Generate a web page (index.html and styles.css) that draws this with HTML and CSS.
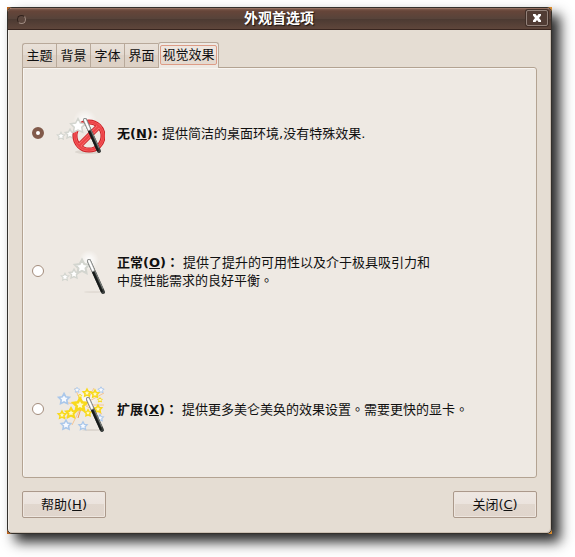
FILE: index.html
```html
<!DOCTYPE html>
<html lang="zh-CN">

<head>
    <meta charset="UTF-8">
    <meta name="viewport" content="width=device-width, initial-scale=1.0">
    <title>外观首选项</title>
    <link rel="stylesheet" href="styles.css">
</head>

<body>
    <svg class="defs" width="0" height="0" aria-hidden="true">
        <defs>
            <path id="star" d="M0 -10 L3.2 -4 L9.8 -3 L5 1.8 L6.2 8.4 L0 5.4 L-6.2 8.4 L-5 1.8 L-9.8 -3 L-3.2 -4 Z" />
            <radialGradient id="glow">
                <stop offset="0" stop-color="#fff" />
                <stop offset="1" stop-color="#fff" stop-opacity="0" />
            </radialGradient>
            <g id="wand">
                <path d="M0 0 L14 31" stroke="#3b3f3e" stroke-width="4" stroke-linecap="round" />
                <path d="M0 0 L4 9" stroke="#9a9c9a" stroke-width="4" stroke-linecap="round" />
                <path d="M0 0 L4 9" stroke="#fff" stroke-width="2" stroke-linecap="round" />
                <path d="M6 10 L14 28" stroke="#7b807d" stroke-width="1" />
                <path d="M4 11 L13 31" stroke="#151918" stroke-width="2" />
            </g>
        </defs>
    </svg>

    <div class="desktop">
        <main class="window">
            <header class="titlebar">
                <button class="menu-button" type="button" aria-label="菜单"></button>
                <h1>外观首选项</h1>
                <button class="close-button" type="button" aria-label="关闭窗口">
                    <svg width="10" height="10" viewBox="0 0 20 20">
                        <path d="M2 2H7L10 6L13 2H18V5L14 10L18 15V18H13L10 14L7 18H2V15L6 10L2 5Z" fill="#fff" />
                    </svg>
                </button>
            </header>

            <div class="content">
                <div class="tabs" role="tablist">
                    <button class="tab" type="button" role="tab">主题</button>
                    <button class="tab" type="button" role="tab">背景</button>
                    <button class="tab" type="button" role="tab">字体</button>
                    <button class="tab" type="button" role="tab">界面</button>
                    <button class="tab active" type="button" role="tab" aria-selected="true"><span>视觉效果</span></button>
                </div>

                <form class="panel">
                    <div class="option">
                        <input type="radio" name="effects" id="none" checked>
                        <svg class="icon" viewBox="-2 0 49 49" fill="none">
                            <ellipse cx="30" cy="43" rx="13" ry="2" fill="#dcd6cf" />
                            <circle cx="27" cy="12" r="12" fill="url(#glow)" />
                            <g fill="#fff" stroke="#d3d5cf" stroke-width="3">
                                <use href="#star" transform="translate(3 27) scale(.38)" />
                                <use href="#star" transform="translate(12 25) scale(.48)" />
                            </g>
                            <circle cx="31" cy="27" r="14" stroke="#cc1f24" stroke-width="5" />
                            <path d="M21 37 L41 17" stroke="#cc1f24" stroke-width="6" />
                            <circle cx="31" cy="27" r="14" stroke="#f4696a" stroke-width="3" />
                            <path d="M20 38 L42 16" stroke="#f4696a" stroke-width="4" />
                            <circle cx="31" cy="27" r="14" stroke="#ee4448" stroke-width="2" />
                            <path d="M21 37 L41 17" stroke="#ee4448" stroke-width="2" />
                            <use href="#star" transform="translate(20 17) scale(.75)" fill="#fff" stroke="#d3d5cf" stroke-width="2" />
                            <use href="#wand" transform="translate(27 11)" />
                        </svg>
                        <label for="none"><strong>无(<u>N</u>):</strong> 提供简洁的桌面环境,没有特殊效果.</label>
                    </div>

                    <div class="option">
                        <input type="radio" name="effects" id="normal">
                        <svg class="icon" viewBox="-2 0 49 49" fill="none">
                            <ellipse cx="36" cy="45" rx="10" ry="1" fill="#e2dcd5" />
                            <circle cx="31" cy="13" r="10" fill="url(#glow)" />
                            <g fill="#fff" stroke="#d3d5cf" stroke-width="3">
                                <use href="#star" transform="translate(7 30) scale(.38)" />
                                <use href="#star" transform="translate(16 27) scale(.48)" />
                                <use href="#star" transform="translate(24 20) scale(.72)" />
                            </g>
                            <use href="#wand" transform="translate(31 14)" />
                        </svg>
                        <label for="normal"><strong>正常(<u>O</u>)<span class="mark" lang="zh-TW">：</span></strong> 提供了提升的可用性以及介于极具吸引力和<br>中度性能需求的良好平衡<span class="mark" lang="zh-TW">。</span></label>
                    </div>

                    <div class="option">
                        <input type="radio" name="effects" id="extra">
                        <svg class="icon" viewBox="-2 0 49 49" fill="none">
                            <ellipse cx="34" cy="45" rx="10" ry="1" fill="#dcd6cf" />
                            <circle cx="29" cy="14" r="11" fill="url(#glow)" />
                            <g stroke="#f7c592" stroke-width="1">
                                <path d="M24 20 L4 17 M24 20 L6 34 M24 20 L14 40 M24 20 L17 3 M28 18 L36 3 M28 18 L46 8 M28 20 L46 20 M28 21 L44 29" />
                                <path d="M24 20 L20 33" stroke="#f29a55" />
                            </g>
                            <g fill="#f7faff" stroke="#aac7ea" stroke-width="3">
                                <use href="#star" transform="translate(6 14) scale(.55)" />
                                <use href="#star" transform="translate(19 5) scale(.28)" />
                                <use href="#star" transform="translate(43 5) scale(.32)" />
                                <use href="#star" transform="translate(8 40) scale(.5)" />
                                <use href="#star" transform="translate(25 41) scale(.42)" />
                                <use href="#star" transform="translate(42 33) scale(.35)" />
                            </g>
                            <g fill="#fffbc8" stroke="#f8d91c" stroke-width="4">
                                <use href="#star" transform="translate(4 30) scale(.38)" />
                                <use href="#star" transform="translate(13 28) scale(.5)" />
                                <use href="#star" transform="translate(22 20) scale(.66)" />
                                <use href="#star" transform="translate(29 8) scale(.38)" />
                                <use href="#star" transform="translate(37 9) scale(.38)" />
                                <use href="#star" transform="translate(40 24) scale(.38)" />
                                <use href="#star" transform="translate(30 28) scale(.34)" />
                                <use href="#star" transform="translate(42 15) scale(.24)" />
                                <use href="#star" transform="translate(22 11) scale(.2)" />
                            </g>
                            <use href="#wand" transform="translate(30 14)" />
                        </svg>
                        <label for="extra"><strong>扩展(<u>X</u>)<span class="mark" lang="zh-TW">：</span></strong> 提供更多美仑美奂的效果设置<span class="mark" lang="zh-TW">。</span>需要更快的显卡<span class="mark" lang="zh-TW">。</span></label>
                    </div>
                </form>

                <footer class="actions">
                    <button class="action" type="button">帮助(<u>H</u>)</button>
                    <button class="action" type="button">关闭(<u>C</u>)</button>
                </footer>
            </div>
        </main>
    </div>
</body>

</html>
```
FILE: styles.css
```css
* {
    box-sizing: border-box;
}

body {
    margin: 0;
    padding: 7px 23px 23px 7px;
    background-color: #fff;
    font-family: "DejaVu Sans", "Noto Sans CJK SC", sans-serif;
    font-size: 13px;
    line-height: 17px;
    color: #101010;
}

button {
    margin: 0;
    padding: 0;
    font: inherit;
    color: inherit;
}

.defs {
    position: absolute;
}

/* wallpaper showing through the rounded corners */
.desktop {
    background: linear-gradient(to right, #b9621c, #d98a2b);
    box-shadow: 8px 8px 12px rgba(0, 0, 0, 0.85);
}

.window {
    background-color: #e5ddd3;
    border: 1px solid #33302c;
    border-radius: 5px;
    overflow: hidden;
    box-shadow: inset 1px 0 #f3eee8, inset -1px -1px #cbbfb2;
}

/* Title bar */
.titlebar {
    display: flex;
    align-items: center;
    height: 22px;
    padding: 0 3px 0 9px;
    background: linear-gradient(#7a594c, #664539 10%, #56433a 50%, #4c3a32 52%, #5f463b);
    border-top: 1px solid #947061;
    border-bottom: 1px solid #38251f;
}

.titlebar h1 {
    flex: 1;
    margin: 0;
    padding-left: 6px;
    padding-bottom: 2px;
    font-size: 14px;
    line-height: 18px;
    text-align: center;
    color: #fff;
    text-shadow: 1px 1px 1px #1c120e;
}

.menu-button {
    width: 9px;
    height: 9px;
    border: 1px solid #30221c;
    border-right-color: #a08c82;
    border-bottom-color: #a08c82;
    border-radius: 50%;
    background-color: #5b463d;
}

.close-button {
    display: flex;
    align-items: center;
    justify-content: center;
    width: 22px;
    height: 16px;
    margin-bottom: 2px;
    border: 1px solid #93827a;
    border-radius: 2px;
    background-color: #513c34;
    box-shadow: 0 0 0 1px #412f28;
}

/* Tabs */
.content {
    padding: 12px 14px 15px;
}

.tabs {
    display: flex;
    align-items: flex-end;
    height: 26px;
    margin-bottom: -1px;
}

.tab {
    width: 34px;
    height: 25px;
    border: 1px solid #b8a99a;
    border-right: none;
    background: linear-gradient(#e9e1d9, #e3d9cf 50%, #ddd2c7 50%, #ddd1c5);
}

.tab:first-child {
    border-top-left-radius: 3px;
}

.tab.active {
    position: relative;
    width: 61px;
    height: 26px;
    padding: 2px 1px;
    border: 1px solid #b8a99a;
    border-bottom: none;
    border-radius: 3px 3px 0 0;
    background: #eee9e3;
}

.tab.active span {
    display: block;
    margin-bottom: 2px;
    border: 1px solid #dd9c86;
    border-radius: 2px;
    background: linear-gradient(#eee6df 50%, #e5dad0 50%);
    line-height: 18px;
}

.panel {
    display: flex;
    flex-direction: column;
    gap: 12px;
    padding: 2px 9px 5px;
    border: 1px solid #b3a392;
    border-radius: 0 3px 3px 3px;
    background-color: #eee9e3;
    box-shadow: inset 1px 1px #f8f5f1;
}

/* Options */
.option {
    display: flex;
    align-items: center;
    gap: 12px;
    min-height: 126px;
}

.option input {
    appearance: none;
    flex: none;
    width: 12px;
    height: 12px;
    margin: 0;
    border: 1px solid #a38c7c;
    border-radius: 50%;
    background-color: #fff;
}

.option input:checked {
    border: 4px solid #815a4a;
}

.icon {
    flex: none;
    width: 49px;
    height: 49px;
}

.mark {
    font-family: "Noto Sans CJK TC", sans-serif;
}

/* Bottom buttons */
.actions {
    display: flex;
    justify-content: space-between;
    margin-top: 13px;
}

.action {
    width: 84px;
    height: 27px;
    border: 1px solid #ab998b;
    border-radius: 2px;
    background: linear-gradient(#eee8e3, #ebe3dd 50%, #e1d7ce 50%, #e0d5cc);
    box-shadow: inset 0 0 0 1px #eee6df;
}
```
